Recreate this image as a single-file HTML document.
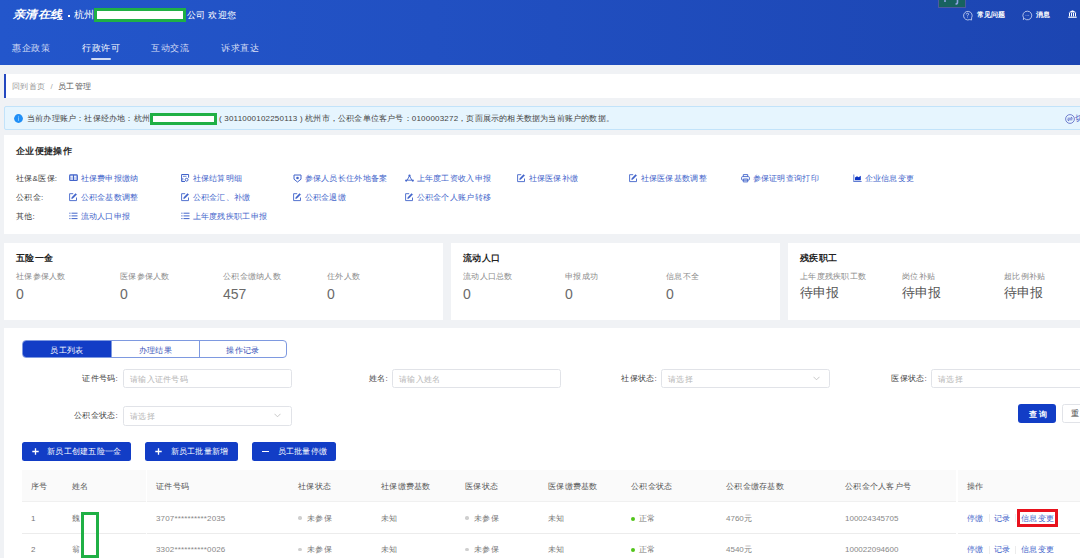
<!DOCTYPE html>
<html><head><meta charset="utf-8">
<style>
*{box-sizing:border-box;margin:0;padding:0}
html,body{width:1080px;height:558px;overflow:hidden;background:#f0f2f5;font-family:"Liberation Sans",sans-serif;color:#333}
.a{position:absolute;white-space:nowrap}
#hdr{position:absolute;left:0;top:0;width:1080px;height:64.5px;background:linear-gradient(90deg,#2356cb 0%,#2150c2 40%,#1c45b2 100%)}
.wt{color:#fff}
.card{position:absolute;background:#fff}
.lnk{color:#4264ca}
.lbl{color:#444}
.inp{position:absolute;border:1px solid #e1e3e8;border-radius:2.5px;background:#fff}
.ph{position:absolute;color:#b5b5b5;font-size:8px;letter-spacing:.3px}
.btn{position:absolute;background:#123dc6;border-radius:2.5px;color:#fff}
.th{position:absolute;font-size:8px;letter-spacing:.3px;color:#555;line-height:12px}
.td{position:absolute;font-size:8px;letter-spacing:.3px;color:#777;line-height:12px}
</style></head><body>
<div id="hdr"></div>
<div class="a wt" style="left:11.5px;top:6.8px;font-size:12px;line-height:14px;font-weight:900;letter-spacing:.5px;transform:skewX(-14deg) scaleY(.92);transform-origin:0 100%">亲清在线</div>
<div class="a" style="left:57px;top:19px;width:6px;height:1px;background:rgba(255,255,255,.8)"></div>
<div class="a" style="left:68px;top:15px;width:2px;height:2px;background:#fff"></div>
<div class="a wt" style="left:74px;top:9px;font-size:10px;line-height:12px">杭州</div>
<div class="a" style="left:94px;top:8px;width:92px;height:14px;border:3px solid #1fb045;background:#fff"></div>
<div class="a wt" style="left:187px;top:9px;font-size:9px;line-height:12px;letter-spacing:.3px">公司 欢迎您</div>
<div class="a" style="left:12px;top:42px;font-size:9px;line-height:12px;color:#d6def5;letter-spacing:.5px">惠企政策</div>
<div class="a" style="left:82px;top:42px;font-size:9px;line-height:12px;color:#fff;letter-spacing:.5px">行政许可</div>
<div class="a" style="left:151px;top:42px;font-size:9px;line-height:12px;color:#d6def5;letter-spacing:.5px">互动交流</div>
<div class="a" style="left:221px;top:42px;font-size:9px;line-height:12px;color:#d6def5;letter-spacing:.5px">诉求直达</div>
<div class="a" style="left:91px;top:58px;width:20px;height:2px;background:rgba(255,255,255,.8);border-radius:1px"></div>
<div class="a" style="left:938px;top:-1px;width:28px;height:8.5px;background:#17625f;border:1px solid #4c5aa0"></div>
<svg class="a" style="left:938px;top:0" width="28" height="8" viewBox="0 0 28 8"><path d="M7 0v2" stroke="#8da2e2" stroke-width="1.6"/><path d="M19.5 0v2.2q0 1.8-2 1.8" stroke="#8da2e2" stroke-width="1.6" fill="none"/></svg>
<svg class="a" style="left:962px;top:9.5px" width="11" height="11" viewBox="0 0 11 11"><path d="M9.6 9.6L9.9 9.9 7.6 9.6A4.3 4.3 0 1 1 9.6 7.8z" fill="none" stroke="#d4dcf5" stroke-width="0.8"/><path d="M4.3 4.4q0-1.2 1.2-1.2t1.1 1.1q0 .7-.8 1-.3.2-.3.7v.4" fill="none" stroke="#d4dcf5" stroke-width="0.8"/><circle cx="5.5" cy="7.6" r=".45" fill="#d4dcf5"/></svg>
<div class="a wt" style="left:977px;top:9px;font-size:7px;line-height:11px;font-weight:bold">常见问题</div>
<svg class="a" style="left:1022px;top:9.5px" width="11" height="11" viewBox="0 0 11 11"><path d="M5.5 1.2A4.3 4.3 0 1 1 2.5 8.6L1.3 9.6 1.6 7.9A4.3 4.3 0 0 1 5.5 1.2z" fill="none" stroke="#d4dcf5" stroke-width="0.8"/><path d="M3.5 5.4h4" stroke="#b9c6ee" stroke-width="0.6" stroke-dasharray="0.8 0.5"/></svg>
<div class="a wt" style="left:1036px;top:9px;font-size:7px;line-height:11px;font-weight:bold">消息</div>
<svg class="a" style="left:1067.5px;top:10px" width="9" height="8" viewBox="0 0 9 8"><path d="M4.5 0.3L8.6 2.6H0.4z" fill="#fff"/><path d="M1.5 3v3.4M3.5 3v3.4M5.5 3v3.4M7.5 3v3.4" stroke="#fff" stroke-width="1"/><path d="M0.3 6.6h8.4v1.2H0.3z" fill="#fff"/></svg>
<div class="card" style="left:4px;top:74px;width:1076px;height:24px"></div>
<div class="a" style="left:4px;top:74px;width:2px;height:24px;background:#2448c0"></div>
<div class="a" style="left:12px;top:81px;font-size:8px;line-height:12px;letter-spacing:.3px;color:#999">回到首页</div>
<div class="a" style="left:50.5px;top:81px;font-size:8px;line-height:12px;color:#aaa">/</div>
<div class="a" style="left:58px;top:81px;font-size:8px;line-height:12px;letter-spacing:.3px;color:#555">员工管理</div>
<div class="a" style="left:4px;top:106px;width:1080px;height:24px;background:#e6f5fe;border:1px solid #c2e3fa;border-radius:2px"></div>
<svg class="a" style="left:13.6px;top:113.8px" width="9" height="9" viewBox="0 0 9 9"><circle cx="4.5" cy="4.5" r="4.4" fill="#1f8ff7"/><path d="M4.5 3.3v3.6" stroke="#8cc8fb" stroke-width=".9"/><circle cx="4.5" cy="2.3" r=".5" fill="#8cc8fb"/></svg>
<svg class="a" style="left:1064.5px;top:113.5px" width="10" height="10" viewBox="0 0 10 10" fill="none" stroke="#5563c4" stroke-width=".8"><circle cx="5" cy="5" r="4.4"/><path d="M2.6 4.2h4.8L6 3M7.4 5.8H2.6L4 7"/></svg>
<div class="a" style="left:1075px;top:112.5px;font-size:8px;line-height:12px;color:#4a5cc4">切换</div>
<div class="a" style="left:27px;top:113px;font-size:8px;line-height:12px;letter-spacing:.2px;color:#444">当前办理账户：社保经办地：杭州</div>
<div class="a" style="left:150px;top:113px;width:67px;height:12px;border:3px solid #1fb045;background:#fff"></div>
<div class="a" style="left:219px;top:113px;font-size:8px;line-height:12px;letter-spacing:.2px;color:#444">( 3011000102250113 ) 杭州市，公积金单位客户号：0100003272，页面展示的相关数据为当前账户的数据。</div>
<div class="card" style="left:4px;top:135px;width:1076px;height:99px"></div>
<div class="a" style="left:16px;top:144px;font-size:9px;line-height:14px;font-weight:bold;color:#2a2a2a;letter-spacing:.35px">企业便捷操作</div>
<div class="a lbl" style="left:16px;top:173px;font-size:8px;line-height:12px;letter-spacing:.3px">社保&amp;医保:</div>
<div class="a lbl" style="left:16px;top:192px;font-size:8px;line-height:12px;letter-spacing:.3px">公积金:</div>
<div class="a lbl" style="left:16px;top:211px;font-size:8px;line-height:12px;letter-spacing:.3px">其他:</div>
<svg class="a" style="left:68.6px;top:174px" width="9" height="9" viewBox="0 0 9 9" fill="none" stroke="#4264ca" stroke-width="0.9"><rect x="0.7" y="0.9" width="7.6" height="5.6" rx=".8" stroke-width="1.2" fill="#c9d3f2"/><path d="M4.5 0.9v5.6" stroke-width="1"/><path d="M1.6 2.6h2M5 2.6h2" stroke-width=".7" stroke="#fff"/></svg>
<div class="a lnk" style="left:80.5px;top:173px;font-size:8px;line-height:12px;letter-spacing:.3px">社保费申报缴纳</div>
<svg class="a" style="left:180.6px;top:174px" width="9" height="9" viewBox="0 0 9 9" fill="none" stroke="#4264ca" stroke-width="0.9"><path d="M4 7.5H0.6V0.5h7v3.2" stroke-width="1"/><path d="M2 2.3h3.5" stroke-width=".8"/><circle cx="5.6" cy="5.7" r="1.4" stroke-width="1"/><path d="M1.8 4v2.5" stroke-width=".8"/></svg>
<div class="a lnk" style="left:192.5px;top:173px;font-size:8px;line-height:12px;letter-spacing:.3px">社保结算明细</div>
<svg class="a" style="left:292.6px;top:174px" width="9" height="9" viewBox="0 0 9 9" fill="none" stroke="#4264ca" stroke-width="0.9"><path d="M1 1h7v4.2L4.5 8 1 5.2z" stroke-width="1"/><circle cx="4.5" cy="4" r="1.3" fill="#4264ca" stroke="none"/></svg>
<div class="a lnk" style="left:304.5px;top:173px;font-size:8px;line-height:12px;letter-spacing:.3px">参保人员长住外地备案</div>
<svg class="a" style="left:404.6px;top:174px" width="9" height="9" viewBox="0 0 9 9" fill="none" stroke="#4264ca" stroke-width="0.9"><circle cx="4.5" cy="1.6" r="1.1" fill="#4264ca" stroke="none"/><circle cx="1.2" cy="6.6" r="1.1" fill="#4264ca" stroke="none"/><circle cx="7.8" cy="6.6" r="1.1" fill="#4264ca" stroke="none"/><path d="M4.5 1.6L2.2 6.2h4.6z" stroke-width=".9"/></svg>
<div class="a lnk" style="left:416.5px;top:173px;font-size:8px;line-height:12px;letter-spacing:.3px">上年度工资收入申报</div>
<svg class="a" style="left:516.6px;top:174px" width="9" height="9" viewBox="0 0 9 9" fill="none" stroke="#4264ca" stroke-width="0.9"><path d="M7.5 4.5V7.6H0.6V0.7h3.6"/><path d="M2.6 5.6L3 4.2 6.6 0.6 7.6 1.6 4 5.2z" fill="#4264ca" stroke-width=".5"/></svg>
<div class="a lnk" style="left:528.5px;top:173px;font-size:8px;line-height:12px;letter-spacing:.3px">社保医保补缴</div>
<svg class="a" style="left:628.6px;top:174px" width="9" height="9" viewBox="0 0 9 9" fill="none" stroke="#4264ca" stroke-width="0.9"><path d="M7.5 4.5V7.6H0.6V0.7h3.6"/><path d="M2.6 5.6L3 4.2 6.6 0.6 7.6 1.6 4 5.2z" fill="#4264ca" stroke-width=".5"/></svg>
<div class="a lnk" style="left:640.5px;top:173px;font-size:8px;line-height:12px;letter-spacing:.3px">社保医保基数调整</div>
<svg class="a" style="left:740.6px;top:174px" width="9" height="9" viewBox="0 0 9 9" fill="none" stroke="#4264ca" stroke-width="0.9"><path d="M2.3 2.6V0.6h4.4v2"/><rect x="0.6" y="2.6" width="7.8" height="3.6" rx="1"/><path d="M2.3 5h4.4v2.9H2.3z"/></svg>
<div class="a lnk" style="left:752.5px;top:173px;font-size:8px;line-height:12px;letter-spacing:.3px">参保证明查询打印</div>
<svg class="a" style="left:853px;top:174px" width="9" height="9" viewBox="0 0 9 9"><path d="M0.3 0.5h1v6.4h7.3v1H0.3z" fill="#4264ca" opacity=".85"/><path d="M2 6.3V3.5l2-1.2 1.6 0.9 2.2-1.5v4.6z" fill="#0b34c4"/></svg>
<div class="a lnk" style="left:864.5px;top:173px;font-size:8px;line-height:12px;letter-spacing:.3px">企业信息变更</div>
<svg class="a" style="left:68.6px;top:193px" width="9" height="9" viewBox="0 0 9 9" fill="none" stroke="#4264ca" stroke-width="0.9"><path d="M7.5 4.5V7.6H0.6V0.7h3.6"/><path d="M2.6 5.6L3 4.2 6.6 0.6 7.6 1.6 4 5.2z" fill="#4264ca" stroke-width=".5"/></svg>
<div class="a lnk" style="left:80.5px;top:192px;font-size:8px;line-height:12px;letter-spacing:.3px">公积金基数调整</div>
<svg class="a" style="left:180.6px;top:193px" width="9" height="9" viewBox="0 0 9 9" fill="none" stroke="#4264ca" stroke-width="0.9"><path d="M7.5 4.5V7.6H0.6V0.7h3.6"/><path d="M2.6 5.6L3 4.2 6.6 0.6 7.6 1.6 4 5.2z" fill="#4264ca" stroke-width=".5"/></svg>
<div class="a lnk" style="left:192.5px;top:192px;font-size:8px;line-height:12px;letter-spacing:.3px">公积金汇、补缴</div>
<svg class="a" style="left:292.6px;top:193px" width="9" height="9" viewBox="0 0 9 9" fill="none" stroke="#4264ca" stroke-width="0.9"><path d="M7.5 4.5V7.6H0.6V0.7h3.6"/><path d="M2.6 5.6L3 4.2 6.6 0.6 7.6 1.6 4 5.2z" fill="#4264ca" stroke-width=".5"/></svg>
<div class="a lnk" style="left:304.5px;top:192px;font-size:8px;line-height:12px;letter-spacing:.3px">公积金退缴</div>
<svg class="a" style="left:404.6px;top:193px" width="9" height="9" viewBox="0 0 9 9" fill="none" stroke="#4264ca" stroke-width="0.9"><path d="M7.5 4.5V7.6H0.6V0.7h3.6"/><path d="M2.6 5.6L3 4.2 6.6 0.6 7.6 1.6 4 5.2z" fill="#4264ca" stroke-width=".5"/></svg>
<div class="a lnk" style="left:416.5px;top:192px;font-size:8px;line-height:12px;letter-spacing:.3px">公积金个人账户转移</div>
<svg class="a" style="left:68.6px;top:212px" width="9" height="9" viewBox="0 0 9 9" fill="none" stroke="#4264ca" stroke-width="0.9"><path d="M0.3 1.2h1.2M0.3 3.9h1.2M0.3 6.6h1.2M2.5 1.2h6M2.5 3.9h6M2.5 6.6h6" stroke-width="1"/></svg>
<div class="a lnk" style="left:80.5px;top:211px;font-size:8px;line-height:12px;letter-spacing:.3px">流动人口申报</div>
<svg class="a" style="left:180.6px;top:212px" width="9" height="9" viewBox="0 0 9 9" fill="none" stroke="#4264ca" stroke-width="0.9"><path d="M0.3 1.2h1.2M0.3 3.9h1.2M0.3 6.6h1.2M2.5 1.2h6M2.5 3.9h6M2.5 6.6h6" stroke-width="1"/></svg>
<div class="a lnk" style="left:192.5px;top:211px;font-size:8px;line-height:12px;letter-spacing:.3px">上年度残疾职工申报</div>
<div class="card" style="left:4px;top:243px;width:439px;height:77px"></div>
<div class="card" style="left:451px;top:243px;width:329px;height:77px"></div>
<div class="card" style="left:788px;top:243px;width:292px;height:77px"></div>
<div class="a" style="left:16px;top:252px;font-size:9px;line-height:12px;font-weight:bold;color:#222;letter-spacing:.3px">五险一金</div>
<div class="a" style="left:16px;top:271px;font-size:8px;line-height:12px;color:#8a8a8a;letter-spacing:.3px">社保参保人数</div>
<div class="a" style="left:16px;top:286px;font-size:14px;line-height:16px;color:#6a6a6a">0</div>
<div class="a" style="left:120px;top:271px;font-size:8px;line-height:12px;color:#8a8a8a;letter-spacing:.3px">医保参保人数</div>
<div class="a" style="left:120px;top:286px;font-size:14px;line-height:16px;color:#6a6a6a">0</div>
<div class="a" style="left:223px;top:271px;font-size:8px;line-height:12px;color:#8a8a8a;letter-spacing:.3px">公积金缴纳人数</div>
<div class="a" style="left:223px;top:286px;font-size:14px;line-height:16px;color:#6a6a6a">457</div>
<div class="a" style="left:327px;top:271px;font-size:8px;line-height:12px;color:#8a8a8a;letter-spacing:.3px">住外人数</div>
<div class="a" style="left:327px;top:286px;font-size:14px;line-height:16px;color:#6a6a6a">0</div>
<div class="a" style="left:463px;top:252px;font-size:9px;line-height:12px;font-weight:bold;color:#222;letter-spacing:.3px">流动人口</div>
<div class="a" style="left:463px;top:271px;font-size:8px;line-height:12px;color:#8a8a8a;letter-spacing:.3px">流动人口总数</div>
<div class="a" style="left:463px;top:286px;font-size:14px;line-height:16px;color:#6a6a6a">0</div>
<div class="a" style="left:565px;top:271px;font-size:8px;line-height:12px;color:#8a8a8a;letter-spacing:.3px">申报成功</div>
<div class="a" style="left:565px;top:286px;font-size:14px;line-height:16px;color:#6a6a6a">0</div>
<div class="a" style="left:666px;top:271px;font-size:8px;line-height:12px;color:#8a8a8a;letter-spacing:.3px">信息不全</div>
<div class="a" style="left:666px;top:286px;font-size:14px;line-height:16px;color:#6a6a6a">0</div>
<div class="a" style="left:800px;top:252px;font-size:9px;line-height:12px;font-weight:bold;color:#222;letter-spacing:.3px">残疾职工</div>
<div class="a" style="left:800px;top:271px;font-size:8px;line-height:12px;color:#8a8a8a;letter-spacing:.3px">上年度残疾职工数</div>
<div class="a" style="left:800px;top:284.5px;font-size:13px;line-height:16px;color:#555">待申报</div>
<div class="a" style="left:902px;top:271px;font-size:8px;line-height:12px;color:#8a8a8a;letter-spacing:.3px">岗位补贴</div>
<div class="a" style="left:902px;top:284.5px;font-size:13px;line-height:16px;color:#555">待申报</div>
<div class="a" style="left:1004px;top:271px;font-size:8px;line-height:12px;color:#8a8a8a;letter-spacing:.3px">超比例补贴</div>
<div class="a" style="left:1004px;top:284.5px;font-size:13px;line-height:16px;color:#555">待申报</div>
<div class="card" style="left:4px;top:328px;width:1076px;height:240px"></div>
<div class="a" style="left:22px;top:340px;width:265px;height:18px;border:1px solid #7e99e0;border-radius:4px;overflow:hidden;background:#fff">
  <div class="a" style="left:0;top:0;width:88px;height:16px;background:#123dc6"></div>
  <div class="a" style="left:176px;top:0;width:1px;height:16px;background:#7e99e0"></div>
  <div class="a" style="left:88px;top:0;width:1px;height:16px;background:#7e99e0"></div>
  <div class="a" style="left:0;top:3.5px;width:88px;text-align:center;font-size:8px;line-height:12px;color:#fff;letter-spacing:.3px">员工列表</div>
  <div class="a" style="left:88.5px;top:3.5px;width:88px;text-align:center;font-size:8px;line-height:12px;color:#3550b8;letter-spacing:.3px">办理结果</div>
  <div class="a" style="left:176.5px;top:3.5px;width:87px;text-align:center;font-size:8px;line-height:12px;color:#3550b8;letter-spacing:.3px">操作记录</div>
</div>
<div class="a lbl" style="right:962px;top:372.5px;font-size:8px;line-height:12px;letter-spacing:.3px;text-align:right">证件号码:</div>
<div class="inp" style="left:123px;top:369px;width:169px;height:19px"></div>
<div class="a ph" style="left:130px;top:373.5px;line-height:12px">请输入证件号码</div>
<div class="a lbl" style="right:692px;top:372.5px;font-size:8px;line-height:12px;letter-spacing:.3px;text-align:right">姓名:</div>
<div class="inp" style="left:392px;top:369px;width:169px;height:19px"></div>
<div class="a ph" style="left:399px;top:373.5px;line-height:12px">请输入姓名</div>
<div class="a lbl" style="right:423px;top:372.5px;font-size:8px;line-height:12px;letter-spacing:.3px;text-align:right">社保状态:</div>
<div class="inp" style="left:661px;top:369px;width:169px;height:19px"></div>
<div class="a ph" style="left:668px;top:373.5px;line-height:12px">请选择</div>
<svg class="a" style="left:812.5px;top:376.0px" width="7" height="5" viewBox="0 0 7 5"><path d="M0.5 0.8L3.5 3.8 6.5 0.8" fill="none" stroke="#bbb" stroke-width="0.8"/></svg>
<div class="a lbl" style="right:153px;top:372.5px;font-size:8px;line-height:12px;letter-spacing:.3px;text-align:right">医保状态:</div>
<div class="inp" style="left:931px;top:369px;width:169px;height:19px"></div>
<div class="a ph" style="left:938px;top:373.5px;line-height:12px">请选择</div>
<div class="a lbl" style="right:962px;top:410.0px;font-size:8px;line-height:12px;letter-spacing:.3px;text-align:right">公积金状态:</div>
<div class="inp" style="left:123px;top:406px;width:169px;height:19.5px"></div>
<div class="a ph" style="left:130px;top:410.75px;line-height:12px">请选择</div>
<svg class="a" style="left:273.5px;top:413.25px" width="7" height="5" viewBox="0 0 7 5"><path d="M0.5 0.8L3.5 3.8 6.5 0.8" fill="none" stroke="#bbb" stroke-width="0.8"/></svg>

<div class="btn" style="left:1018px;top:404px;width:38px;height:19px;border-radius:3px"></div>
<div class="a wt" style="left:1020px;top:408.5px;width:38px;text-align:center;font-size:8px;line-height:12px;letter-spacing:2.5px;font-weight:bold">查询</div>
<div class="inp" style="left:1062px;top:404px;width:40px;height:19px"></div>
<div class="a" style="left:1070.5px;top:408px;font-size:8px;line-height:12px;color:#444;letter-spacing:2px">重置</div>
<div class="btn" style="left:22px;top:442px;width:109px;height:18.5px"></div>
<svg class="a" style="left:32px;top:448px" width="7" height="7" viewBox="0 0 7 7"><path d="M3.5 0.3v6.4M0.3 3.5h6.4" stroke="#fff" stroke-width="1.3"/></svg>
<div class="a wt" style="left:47px;top:446px;font-size:8px;line-height:12px;letter-spacing:.3px">新员工创建五险一金</div>
<div class="btn" style="left:145px;top:442px;width:92.5px;height:18.5px"></div>
<svg class="a" style="left:155.3px;top:448px" width="7" height="7" viewBox="0 0 7 7"><path d="M3.5 0.3v6.4M0.3 3.5h6.4" stroke="#fff" stroke-width="1.3"/></svg>
<div class="a wt" style="left:170.5px;top:446px;font-size:8px;line-height:12px;letter-spacing:.3px">新员工批量新增</div>
<div class="btn" style="left:252px;top:442px;width:84px;height:18.5px"></div>
<div class="a" style="left:262px;top:450.7px;width:6.6px;height:1.3px;background:#fff"></div>
<div class="a wt" style="left:277.5px;top:446px;font-size:8px;line-height:12px;letter-spacing:.3px">员工批量停缴</div>


<div class="a" style="left:22px;top:470px;width:1058px;height:31px;background:#fafafa"></div>
<div class="a" style="left:22px;top:533px;width:1058px;height:1px;background:#ececec"></div>
<div class="a" style="left:22px;top:501px;width:1058px;height:1px;background:#f0f0f0"></div>
<div class="a" style="left:145.5px;top:470px;width:1.5px;height:100px;background:#fff;opacity:.85"></div>
<div class="a" style="left:955.5px;top:470px;width:2px;height:100px;background:#fff"></div>

<div class="th" style="left:31px;top:481px">序号</div>
<div class="th" style="left:72px;top:481px">姓名</div>
<div class="th" style="left:156px;top:481px">证件号码</div>
<div class="th" style="left:298px;top:481px">社保状态</div>
<div class="th" style="left:381px;top:481px">社保缴费基数</div>
<div class="th" style="left:465px;top:481px">医保状态</div>
<div class="th" style="left:548px;top:481px">医保缴费基数</div>
<div class="th" style="left:631px;top:481px">公积金状态</div>
<div class="th" style="left:726px;top:481px">公积金缴存基数</div>
<div class="th" style="left:845px;top:481px">公积金个人客户号</div>
<div class="th" style="left:967px;top:481px">操作</div>
<div class="td" style="left:31px;top:512.5px">1</div>
<div class="td" style="left:72px;top:512.5px">魏</div>
<div class="td" style="left:156px;top:512.5px;letter-spacing:.15px;color:#888">3707**********2035</div>
<div class="a" style="left:298.2px;top:516.4px;width:3.4px;height:3.4px;border-radius:50%;background:#cfcfcf"></div>
<div class="td" style="left:307px;top:512.5px">未参保</div>
<div class="td" style="left:381px;top:512.5px">未知</div>
<div class="a" style="left:465.2px;top:516.4px;width:3.4px;height:3.4px;border-radius:50%;background:#cfcfcf"></div>
<div class="td" style="left:474px;top:512.5px">未参保</div>
<div class="td" style="left:548px;top:512.5px">未知</div>
<div class="a" style="left:630.6px;top:516.6px;width:4px;height:4px;border-radius:50%;background:#52c41a"></div>
<div class="td" style="left:639px;top:512.5px">正常</div>
<div class="td" style="left:726px;top:512.5px;letter-spacing:0;color:#888">4760元</div>
<div class="td" style="left:845px;top:512.5px;letter-spacing:0;color:#888">100024345705</div>
<div class="td" style="left:967px;top:512.5px;color:#4264ca">停缴</div>
<div class="a" style="left:989px;top:514px;width:1px;height:8px;background:#ececec"></div>
<div class="td" style="left:994px;top:512.5px;color:#4264ca">记录</div>
<div class="a" style="left:1015px;top:514px;width:1px;height:8px;background:#ececec"></div>
<div class="td" style="left:1021px;top:512.5px;color:#4264ca">信息变更</div>
<div class="td" style="left:31px;top:544px">2</div>
<div class="td" style="left:72px;top:544px">翁</div>
<div class="td" style="left:156px;top:544px;letter-spacing:.15px;color:#888">3302**********0026</div>
<div class="a" style="left:298.2px;top:547.9px;width:3.4px;height:3.4px;border-radius:50%;background:#cfcfcf"></div>
<div class="td" style="left:307px;top:544px">未参保</div>
<div class="td" style="left:381px;top:544px">未知</div>
<div class="a" style="left:465.2px;top:547.9px;width:3.4px;height:3.4px;border-radius:50%;background:#cfcfcf"></div>
<div class="td" style="left:474px;top:544px">未参保</div>
<div class="td" style="left:548px;top:544px">未知</div>
<div class="a" style="left:630.6px;top:548.1px;width:4px;height:4px;border-radius:50%;background:#52c41a"></div>
<div class="td" style="left:639px;top:544px">正常</div>
<div class="td" style="left:726px;top:544px;letter-spacing:0;color:#888">4540元</div>
<div class="td" style="left:845px;top:544px;letter-spacing:0;color:#888">100022094600</div>
<div class="td" style="left:967px;top:544px;color:#4264ca">停缴</div>
<div class="a" style="left:989px;top:545.5px;width:1px;height:8px;background:#ececec"></div>
<div class="td" style="left:994px;top:544px;color:#4264ca">记录</div>
<div class="a" style="left:1015px;top:545.5px;width:1px;height:8px;background:#ececec"></div>
<div class="td" style="left:1021px;top:544px;color:#4264ca">信息变更</div>
<div class="a" style="left:1017px;top:509.4px;width:40.6px;height:17.4px;border:3px solid #e8121d"></div>
<div class="a" style="left:80.5px;top:511.5px;width:18px;height:46px;border:3px solid #1fb045"></div>
</body></html>
